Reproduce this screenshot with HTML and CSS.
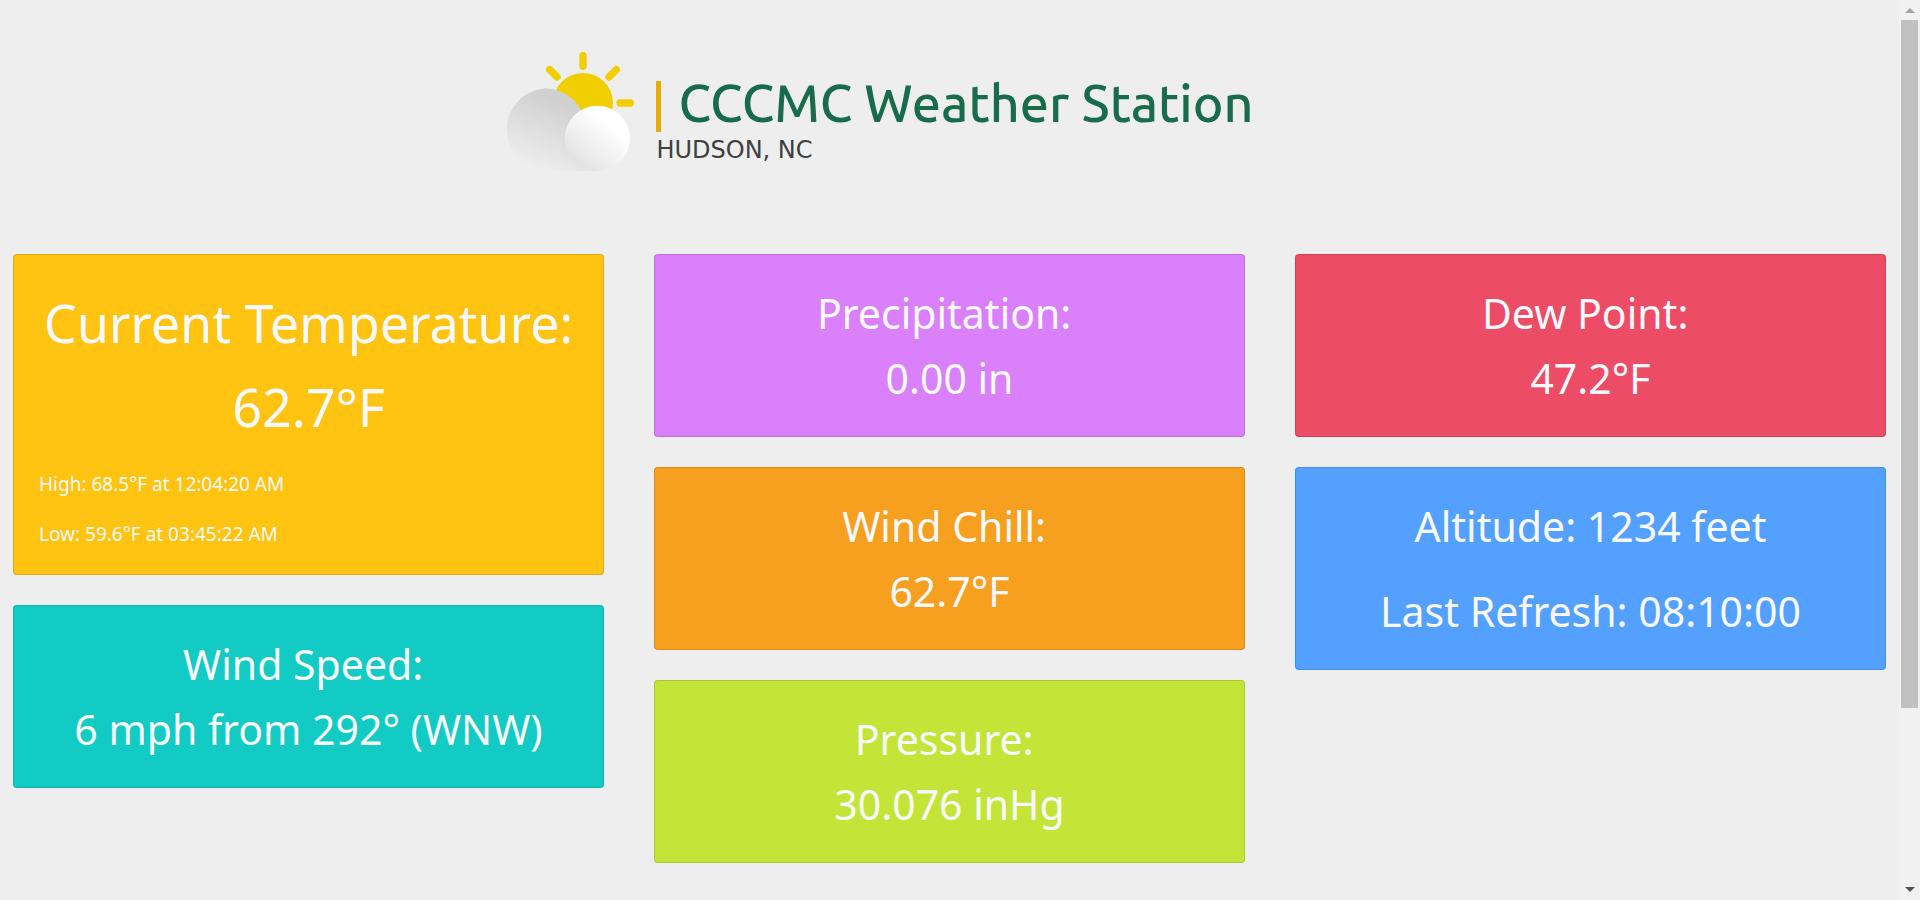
FILE: index.html
```html
<!DOCTYPE html>
<html lang="en">
<head>
  <meta charset="utf-8">
  <meta name="viewport" content="width=device-width, initial-scale=1">
  <title>CCCMC Weather Station</title>
  <link rel="stylesheet" href="styles.css">
</head>
<body>
  <div class="page">
    <header class="header">
      <svg class="logo" viewBox="42 36 393 360" aria-hidden="true">
        <defs>
          <linearGradient id="cloud-back" x1="0.7" y1="0.1" x2="0.3" y2="1">
            <stop offset="0.1" stop-color="#d0d0d0"/>
            <stop offset="1" stop-color="#efefef"/>
          </linearGradient>
          <linearGradient id="cloud-front" x1="0.75" y1="0.35" x2="0.25" y2="0.95">
            <stop offset="0" stop-color="#ffffff"/>
            <stop offset="1" stop-color="#e2e2e2"/>
          </linearGradient>
        </defs>
        <g fill="none" stroke="#f0ce00" stroke-width="22" stroke-linecap="round">
          <path d="M282 47V79M182 89l22 22M382 89l-22 22M393 189h31"/>
        </g>
        <circle cx="282" cy="189" r="90" fill="#f0ce00"/>
        <path d="M167 145a125 125 0 0 1 125 125L325 394H167a125 125 0 0 1 0-249z" fill="url(#cloud-back)"/>
        <circle cx="325" cy="295" r="98" fill="url(#cloud-front)"/>
      </svg>
      <div class="brand">
        <h1 class="brand-name">CCCMC Weather Station</h1>
        <p class="brand-place">HUDSON, NC</p>
      </div>
    </header>
    <main class="board">
      <div class="column">
        <section class="card card-temperature">
          <p class="headline">Current Temperature:<br>62.7°F</p>
          <p class="detail">High: 68.5°F at 12:04:20 AM</p>
          <p class="detail">Low: 59.6°F at 03:45:22 AM</p>
        </section>
        <section class="card card-wind">
          <p class="reading">Wind Speed:&nbsp;<br>6 mph from 292° (WNW)</p>
        </section>
      </div>
      <div class="column">
        <section class="card card-rain">
          <p class="reading">Precipitation:&nbsp;<br>0.00 in</p>
        </section>
        <section class="card card-chill">
          <p class="reading">Wind Chill:&nbsp;<br>62.7°F</p>
        </section>
        <section class="card card-pressure">
          <p class="reading">Pressure:&nbsp;<br>30.076 inHg</p>
        </section>
      </div>
      <div class="column">
        <section class="card card-dew">
          <p class="reading">Dew Point:&nbsp;<br>47.2°F</p>
        </section>
        <section class="card card-info">
          <p class="reading">Altitude: 1234 feet</p>
          <p class="reading">Last Refresh: 08:10:00</p>
        </section>
      </div>
    </main>
  </div>
  <div class="scrollbar" aria-hidden="true">
    <svg class="arrow arrow-up" viewBox="0 0 10 5"><path d="M0 5L5 0L10 5z"/></svg>
    <div class="track"><div class="thumb"></div></div>
    <svg class="arrow arrow-down" viewBox="0 0 10 5"><path d="M0 0L5 5L10 0z"/></svg>
  </div>
</body>
</html>
```
FILE: styles.css
```css
* {
  box-sizing: border-box;
}

body {
  margin: 0;
  height: 100vh;
  display: flex;
  overflow: hidden;
  background: #eeeeee;
  color: #f8f9fa;
  font-family: "Segoe UI", "Noto Sans", "Open Sans", sans-serif;
}

h1,
p {
  margin: 0;
}

.page {
  flex: 1;
  min-width: 0;
  padding: 0 13px;
}

.header {
  display: flex;
  justify-content: center;
  gap: 22px;
  padding: 52px 142px 82px 0;
}

.logo {
  width: 131px;
  height: 120px;
}

.brand {
  padding-top: 29px;
}

.brand-name {
  border-left: 5px solid #e5ac0c;
  padding: 0 0 6px 17px;
  color: #196b4d;
  font-family: Ubuntu, "Noto Sans", sans-serif;
  font-size: 52px;
  font-weight: 500;
  line-height: 45px;
  white-space: nowrap;
}

.brand-place {
  color: #404040;
  font-family: "DejaVu Sans", sans-serif;
  font-size: 24px;
  line-height: 36px;
}

.board {
  display: grid;
  grid-template-columns: repeat(3, minmax(0, 1fr));
  align-items: start;
  gap: 50px;
}

.column {
  display: grid;
  gap: 30px;
}

.card {
  display: grid;
  gap: 20px;
  padding: 26px 25px 25px;
  border: 1px solid rgba(0, 0, 0, 0.125);
  border-radius: 4px;
}

.headline {
  font-size: 52px;
  line-height: 84px;
  text-align: center;
}

.reading {
  font-size: 41px;
  line-height: 65px;
  text-align: center;
}

.detail {
  font-size: 19px;
  line-height: 30px;
}

.card-temperature { background-color: #ffc312; }
.card-wind { background-color: #12cbc4; }
.card-rain { background-color: #d980fa; }
.card-chill { background-color: #f79f1f; }
.card-pressure { background-color: #c4e538; }
.card-dew { background-color: #ed4c67; }
.card-info { background-color: #54a0ff; }

.scrollbar {
  width: 21px;
  display: flex;
  flex-direction: column;
  align-items: center;
  padding: 8px 0;
  background: #f1f1f1;
}

.arrow {
  width: 10px;
  height: 5px;
}

.arrow-up { fill: #a3a3a3; }
.arrow-down { fill: #505050; }

.track {
  flex: 1;
  width: 17px;
  margin: 7px 0;
}

.thumb {
  height: 80%;
  background: #c1c1c1;
}
```
